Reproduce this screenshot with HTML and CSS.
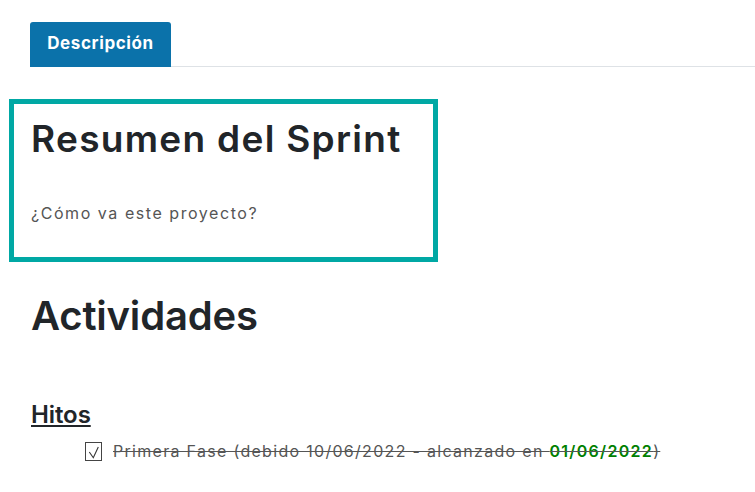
FILE: index.html
```html
<!DOCTYPE html>
<html lang="es">
<head>
<meta charset="utf-8">
<title>Resumen del Sprint</title>
<link rel="stylesheet" href="styles.css">
</head>
<body>
<div class="tabs">
  <div class="tab">Descripción</div>
</div>
<div class="content">
  <section class="summary">
    <h1 class="summary-title">Resumen del Sprint</h1>
    <p class="summary-text">¿Cómo va este proyecto?</p>
  </section>
  <h2 class="section-title">Actividades</h2>
  <h3 class="sub-title">Hitos</h3>
  <ul class="milestones">
    <li class="milestone">
      <svg class="check" width="17" height="19" viewBox="0 0 17 19" aria-hidden="true">
        <rect x="0.5" y="0.5" width="16" height="18" fill="none" stroke="#444" stroke-width="1"/>
        <path d="M4.3 10 L8.3 15.7 L13.3 5" fill="none" stroke="#333" stroke-width="1.1"/>
      </svg>
      <span class="done">Primera Fase (debido 10/06/2022 - alcanzado en <b class="reached">01/06/2022</b>)</span>
    </li>
  </ul>
</div>
</body>
</html>
```
FILE: styles.css
```css
* { box-sizing: border-box; }
body {
  margin: 0;
  font-family: Inter, "Open Sans", sans-serif;
  color: #212529;
  background: #fff;
}
.tabs {
  display: flex;
  margin: 22px 0 0 30px;
  border-bottom: 1px solid #dee2e6;
}
.tab {
  background: #0b72aa;
  color: #fff;
  font-weight: 700;
  font-size: 17px;
  letter-spacing: 0.6px;
  height: 45px;
  width: 141px;
  padding-bottom: 3px;
  display: flex;
  align-items: center;
  justify-content: center;
  border-radius: 3px 3px 0 0;
  margin-bottom: -1px;
}
.content {
  padding: 32px 0 0 9px;
}
.summary {
  width: 429px;
  height: 163px;
  border: 5px solid #00a8a4;
  padding: 10px 17px;
}
.summary-title {
  margin: 0;
  font-size: 37px;
  font-weight: 600;
  line-height: 50px;
  letter-spacing: 1.3px;
}
.summary-text {
  margin: 39px 0 0;
  font-size: 16px;
  letter-spacing: 1.55px;
  color: #555;
}
.section-title {
  margin: 29px 0 0 22px;
  font-size: 40px;
  font-weight: 600;
  line-height: 50px;
  letter-spacing: -0.2px;
}
.sub-title {
  margin: 60px 0 0 22px;
  font-size: 24px;
  font-weight: 600;
  text-decoration: underline;
  line-height: 28px;
  letter-spacing: -0.1px;
}
.milestones {
  list-style: none;
  margin: 12px 0 0 76px;
  padding: 0;
}
.milestone {
  display: flex;
  align-items: center;
  gap: 11px;
  font-size: 16px;
  line-height: 20px;
  letter-spacing: 1.3px;
  color: #555;
}
.check { flex: none; }
.done { text-decoration: line-through; }
.reached { color: #008000; font-weight: 600; }
```
